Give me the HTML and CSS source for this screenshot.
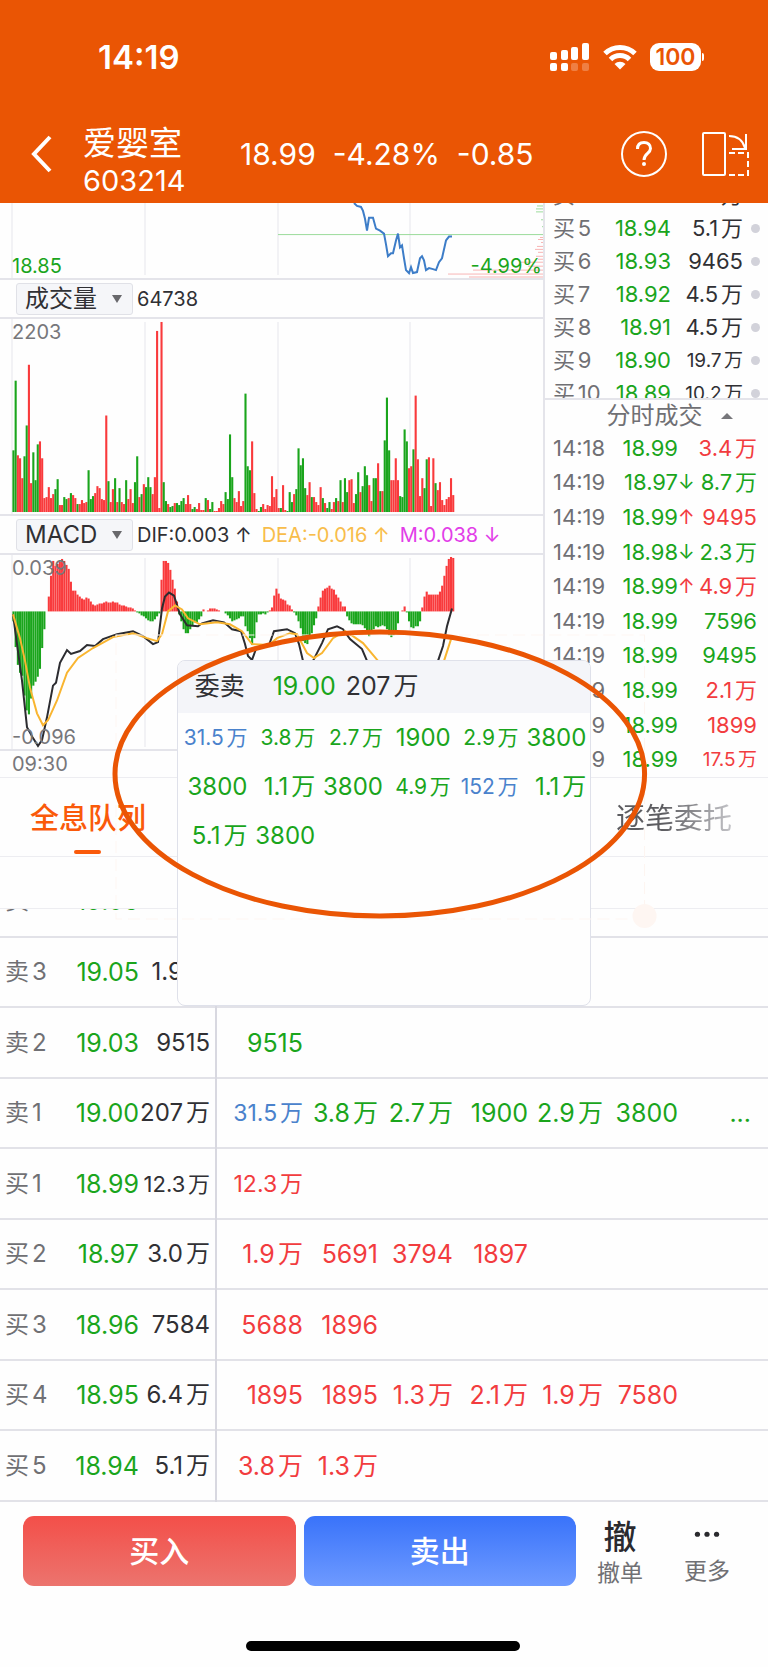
FILE: index.html
```
<!DOCTYPE html>
<html lang="zh-CN">
<head>
    <meta charset="UTF-8">
    <meta name="viewport" content="width=device-width, initial-scale=1.0">
    <title>爱婴室 603214</title>
    <link rel="stylesheet" href="styles.css">
</head>
<body>
    <header class="header">
        <div class="status-bar">
            <span class="clock">14:19</span>
            <div class="status-icons">
                <svg width="40" height="28" viewBox="0 0 40 28" fill="#fff">
                    <rect x="0" y="9" width="7" height="8" rx="2"/>
                    <rect x="11" y="7" width="7" height="10" rx="2"/>
                    <rect x="21" y="4" width="7" height="13" rx="2"/>
                    <rect x="32" y="0" width="7" height="17" rx="2"/>
                    <rect x="0" y="20" width="7" height="8" rx="2"/>
                    <rect x="11" y="20" width="7" height="8" rx="2"/>
                    <rect x="21" y="20" width="7" height="8" rx="2" opacity=".25"/>
                    <rect x="32" y="20" width="7" height="8" rx="2" opacity=".25"/>
                </svg>
                <svg width="34" height="26" viewBox="0 0 34 26" fill="none" stroke="#fff" stroke-width="5">
                    <path d="M2 9.500A21.500 21.500 0 0 1 32 9.500"/>
                    <path d="M7.500 15.500A13.500 13.500 0 0 1 26.500 15.500"/>
                    <path d="M17 25.500L11.500 20A8 8 0 0 1 22.500 20Z" fill="#fff" stroke="none"/>
                </svg>
                <span class="battery">100</span>
            </div>
        </div>
        <div class="title-bar">
            <button class="icon-btn back" aria-label="返回">
                <svg width="22" height="38" viewBox="0 0 22 38" fill="none" stroke="#fff" stroke-width="4"><path d="M20 2L4 19L20 36"/></svg>
            </button>
            <h1 class="stock">爱婴室<small>603214</small></h1>
            <div class="quote"><span>18.99</span><span>-4.28%</span><span>-0.85</span></div>
            <button class="icon-btn help" aria-label="帮助">
                <svg width="46" height="46" viewBox="0 0 46 46" fill="none" stroke="#fff" stroke-width="2">
                    <circle cx="23" cy="23" r="22"/>
                    <path d="M16.500 18C16.500 13.500 19 11.500 23 11.500S29.500 14 29.500 17.500C29.500 22.500 23 22.500 23 29" stroke-width="3"/>
                    <circle cx="23" cy="33" r="2" fill="#fff" stroke="none"/>
                </svg>
            </button>
            <button class="icon-btn rotate" aria-label="横屏">
                <svg width="48" height="46" viewBox="0 0 48 46" fill="none" stroke="#fff" stroke-width="2">
                    <rect x="2" y="2" width="22" height="42" rx="1"/>
                    <path d="M28 22H47V44H26" stroke-dasharray="6 3"/>
                    <path d="M28 5C37 5 42 10 44 17M45 3V18H31"/>
                </svg>
            </button>
        </div>
    </header>

    <main class="main">
        <section class="market">
            <div class="charts">
                <div class="chart price-chart">
                    <svg viewBox="0 0 543 76" preserveAspectRatio="none">
                        <path class="grid" d="M12 0V76M145 0V73M278 0V73M410 0V73"/>
                        <path class="dist-green" d="M278 32H543M537 3H543M536 6H543M536 9H543M541 17H543M542 24H543"/>
                        <path class="dist-red" d="M540 35H543M538 37H543M541 40H543M537 44H543M535 47H543M538 50H543M536 54H543M538 57H543M520 60H543M528 64H543M473 68H543M448 72H543M469 75H543"/>
                        <polyline class="price-line" points="354,0 357,3 361,4 363,8 365,16 367,28 369,15 373,15 376,26 380,28 384,31 386,42 388,54 391,51 393,51 396,38 398,31 400,45 402,43 404,56 406,68 409,71 411,65 413,71 417,70 420,56 422,54 424,58 426,68 429,66 433,67 436,68 439,60 442,56 446,38 449,34 452,34"/>
                    </svg>
                    <span class="mark bottom green">18.85</span>
                    <span class="mark bottom right green">-4.99%</span>
                </div>
                <div class="toolbar">
                    <button class="picker">成交量<i></i></button>
                    <span>64738</span>
                </div>
                <div class="chart volume-chart">
                    <svg viewBox="0 0 543 196" preserveAspectRatio="none">
                        <path class="grid" d="M12 0V196M145 3V194M278 3V194M410 3V194"/>
                        <g id="volumeBars"></g>
                    </svg>
                    <span class="mark top">2203</span>
                </div>
                <div class="toolbar">
                    <button class="picker">MACD<i></i></button>
                    <span>DIF:0.003 ↑</span>
                    <span class="dea">DEA:-0.016 ↑</span>
                    <span class="macd">M:0.038 ↓</span>
                </div>
                <div class="chart macd-chart">
                    <svg viewBox="0 0 543 196" preserveAspectRatio="none">
                        <path class="grid" d="M12 0V196M145 3V194M278 3V194M410 3V194"/>
                        <g id="macdBars"></g>
                        <polyline class="dif-line" points="13,60 17,90 22,127 27,174 33,185 38,193 42,187 47,164 53,132 56,129 60,109 67,96 71,100 80,97 87,91 95,92 103,85 117,80 133,77 143,82 153,90 158,88 162,54 165,42 169,38 174,41 180,60 187,71 198,72 202,69 213,66 224,68 232,75 241,77 245,90 248,102 252,106 256,95 269,91 274,77 287,75 295,79 299,90 303,107 308,118 313,107 322,89 328,75 337,72 343,75 350,85 362,95 367,107 380,130 420,130 438,107 443,92 447,72 452,54"/>
                        <polyline class="dea-line" points="13,60 20,84 25,107 30,134 37,160 43,172 48,167 57,147 67,119 78,104 93,94 113,83 133,79 147,84 157,87 162,80 168,57 175,51 182,55 188,64 200,70 217,68 230,70 242,77 252,90 269,91 277,84 290,79 297,80 307,99 314,104 322,99 333,84 345,77 353,82 363,89 378,107 400,125 430,125 444,107 452,82"/>
                    </svg>
                    <span class="mark top">0.039</span>
                    <span class="mark bottom">-0.096</span>
                </div>
                <div class="time-axis">09:30</div>
            </div>

            <aside class="side">
                <div class="depth">
                    <table class="depth-table">
                        <tr><th>买4</th><td class="green">18.95</td><td>6.4万</td><td><i class="dot"></i></td></tr>
                        <tr><th>买5</th><td class="green">18.94</td><td>5.1万</td><td><i class="dot"></i></td></tr>
                        <tr><th>买6</th><td class="green">18.93</td><td>9465</td><td><i class="dot"></i></td></tr>
                        <tr><th>买7</th><td class="green">18.92</td><td>4.5万</td><td><i class="dot"></i></td></tr>
                        <tr><th>买8</th><td class="green">18.91</td><td>4.5万</td><td><i class="dot"></i></td></tr>
                        <tr><th>买9</th><td class="green">18.90</td><td class="small">19.7万</td><td><i class="dot"></i></td></tr>
                        <tr><th>买10</th><td class="green">18.89</td><td class="small">10.2万</td><td><i class="dot"></i></td></tr>
                    </table>
                </div>
                <button class="trades-title">分时成交<i></i></button>
                <table class="trades">
                    <tr><th>14:18</th><td class="green">18.99</td><td></td><td class="red">3.4万</td></tr>
                    <tr><th>14:19</th><td class="green">18.97</td><td class="green">↓</td><td class="green">8.7万</td></tr>
                    <tr><th>14:19</th><td class="green">18.99</td><td class="red">↑</td><td class="red">9495</td></tr>
                    <tr><th>14:19</th><td class="green">18.98</td><td class="green">↓</td><td class="green">2.3万</td></tr>
                    <tr><th>14:19</th><td class="green">18.99</td><td class="red">↑</td><td class="red">4.9万</td></tr>
                    <tr><th>14:19</th><td class="green">18.99</td><td></td><td class="green">7596</td></tr>
                    <tr><th>14:19</th><td class="green">18.99</td><td></td><td class="green">9495</td></tr>
                    <tr><th>14:19</th><td class="green">18.99</td><td></td><td class="red">2.1万</td></tr>
                    <tr><th>14:19</th><td class="green">18.99</td><td></td><td class="red">1899</td></tr>
                    <tr><th>14:19</th><td class="green">18.99</td><td></td><td class="red small">17.5万</td></tr>
                </table>
            </aside>
        </section>

        <nav class="tabs">
            <a href="#queue" class="tab active">全息队列</a>
            <a href="#orders" class="tab fading">逐笔委托</a>
        </nav>

        <section class="queue" id="queue">
            <table class="queue-table">
                <tr><th>卖4</th><td class="green">19.06</td><td>8.3万</td><td></td></tr>
                <tr><th>卖3</th><td class="green">19.05</td><td>1.9万</td><td></td></tr>
                <tr><th>卖2</th><td class="green">19.03</td><td>9515</td><td><div class="lots green"><span>9515</span></div></td></tr>
                <tr><th>卖1</th><td class="green">19.00</td><td>207万</td><td><div class="lots green"><span class="blue small">31.5万</span><span>3.8万</span><span>2.7万</span><span>1900</span><span>2.9万</span><span>3800</span><span class="more">...</span></div></td></tr>
                <tr><th>买1</th><td class="green">18.99</td><td class="small">12.3万</td><td><div class="lots red"><span class="small">12.3万</span></div></td></tr>
                <tr><th>买2</th><td class="green">18.97</td><td>3.0万</td><td><div class="lots red"><span>1.9万</span><span>5691</span><span>3794</span><span>1897</span></div></td></tr>
                <tr><th>买3</th><td class="green">18.96</td><td>7584</td><td><div class="lots red"><span>5688</span><span>1896</span></div></td></tr>
                <tr><th>买4</th><td class="green">18.95</td><td>6.4万</td><td><div class="lots red"><span>1895</span><span>1895</span><span>1.3万</span><span>2.1万</span><span>1.9万</span><span>7580</span></div></td></tr>
                <tr><th>买5</th><td class="green">18.94</td><td>5.1万</td><td><div class="lots red"><span>3.8万</span><span>1.3万</span></div></td></tr>
            </table>
        </section>

        <div class="popup">
            <div class="popup-head"><span>委卖</span><span class="green">19.00</span><span>207万</span></div>
            <div class="popup-body green">
                <span class="small blue">31.5万</span><span class="small">3.8万</span><span class="small">2.7万</span><span>1900</span><span class="small">2.9万</span><span>3800</span>
                <span>3800</span><span>1.1万</span><span>3800</span><span class="small">4.9万</span><span class="small blue">152万</span><span>1.1万</span>
                <span>5.1万</span><span>3800</span>
            </div>
        </div>
        <svg class="callout" viewBox="0 0 536 300" preserveAspectRatio="none">
            <path d="M1 6H528V290H1Z" stroke="#fdf5f1" stroke-width="1" stroke-dasharray="12 6"/>
            <circle cx="528" cy="287" r="12" fill="#fef6f2"/>
            <ellipse cx="264" cy="145" rx="264" ry="142" stroke="#ea5504" stroke-width="5"/>
        </svg>
    </main>

    <footer class="footer">
        <div class="actions">
            <button class="trade buy">买入</button>
            <button class="trade sell">卖出</button>
            <button class="action"><b>撤</b>撤单</button>
            <button class="action more-action">
                <svg width="30" height="46" viewBox="0 0 30 46" fill="#2a2a2e"><circle cx="4" cy="21" r="3"/><circle cx="15" cy="21" r="3"/><circle cx="26" cy="21" r="3"/></svg>
                更多
            </button>
        </div>
        <div class="home-indicator"></div>
    </footer>

    <script>
        // One entry per minute since 09:30: colour and bar height
        const volume = 'g62 g132 r57 r54 r34 g56 g87 r148 r29 g60 g32 g68 r71 r54 r14 r15 r25 r14 r18 g23 ' +
            'g33 r7 r7 g15 g13 r14 g19 r17 r14 g8 r8 r12 r9 r10 g42 g13 g16 r19 r26 r24 ' +
            'r13 r12 r97 g31 r10 r23 g34 r10 g24 r10 r8 g32 r13 r23 r9 g30 g56 r15 g18 r28 ' +
            'g25 g35 g25 r18 r35 r182 r4 r191 g30 g11 r8 g5 g6 r9 g9 g7 g11 g14 r8 r17 ' +
            'r8 g3 g5 r3 r9 r2 r2 g14 r12 g3 g10 r1 r1 r4 r11 r8 g20 g13 g78 g35 ' +
            'r14 r10 r21 r6 r11 g119 g46 g42 r71 r19 r3 g1 g5 r8 r3 r7 r6 r36 r15 r23 ' +
            'r4 g4 r27 r2 g1 g20 g10 r18 g23 g64 g47 g54 g24 r17 r30 g15 r15 r10 r7 r25 ' +
            'g14 r9 g4 g10 r3 r10 g14 r11 g32 r10 g34 g20 r32 r33 r9 g18 g40 r20 g26 g46 ' +
            'g37 r27 r11 g34 g34 r49 g21 r21 g72 g115 g62 r32 r32 r54 r32 g16 g15 g83 g71 r44 ' +
            'r46 g63 r117 r53 r16 r34 g24 g53 r55 r6 r54 g29 r22 r30 r12 r7 r13 r15 r34 r17';

        // MACD histogram, up is positive
        const macd = [-10, -36, -54, -62, -65, -85, -100, -104, -88, -75, -71, -66, -58, -37, -18, 0, 15, 36, 51, 46,
            48, 50, 53, 51, 47, 43, 30, 21, 21, 17, 15, 13, 12, 14, 13, 10, 7, 6, 7, 8,
            8, 9, 10, 9, 9, 10, 9, 9, 7, 6, 6, 5, 4, 4, 3, 1, -1, -2, -4, -5,
            -7, -9, -10, -10, -8, -5, -2, 32, 51, 51, 49, 42, 32, 23, 10, -3, -10, -18, -22, -22,
            -18, -14, -11, -11, -8, -5, 2, 0, 1, 3, 3, 3, 2, 1, 0, 0, -2, -4, -7, -10,
            -9, -8, -7, -5, -5, -15, -20, -27, -34, -27, -11, -3, -3, -2, -3, -1, 1, 4, 16, 23,
            18, 13, 12, 11, 7, 6, 2, -1, -4, -10, -17, -30, -32, -33, -24, -22, -14, -7, 5, 14,
            21, 23, 24, 26, 23, 22, 17, 14, 10, 5, 5, -5, -9, -12, -13, -13, -13, -13, -14, -17,
            -20, -25, -20, -18, -15, -16, -15, -14, -15, -18, -24, -26, -24, -21, -12, 0, 1, 5, -1, -10,
            -16, -17, -15, -15, -10, 4, 15, 20, 17, 17, 17, 17, 17, 20, 26, 36, 46, 53, 55, 54];

        const step = 2.21;
        const colors = { r: '#f93a3c', g: '#1aa51c' };

        function bar(i, y, height, color) {
            const x = (12.4 + i * step).toFixed(2);
            return `<rect x="${x}" y="${y}" width="2.1" height="${height}" fill="${color}"/>`;
        }

        document.getElementById('volumeBars').innerHTML = volume.split(' ').map((item, i) => {
            const height = Number(item.slice(1));
            return bar(i, 194 - height, height, colors[item[0]]);
        }).join('');

        document.getElementById('macdBars').innerHTML = macd.map((value, i) =>
            value >= 0 ? bar(i, 57 - value, value, colors.r) : bar(i, 57, -value, colors.g)
        ).join('');
    </script>
</body>
</html>
```
FILE: styles.css
```
* {
    margin: 0;
    padding: 0;
    box-sizing: border-box;
}

body {
    font-family: Inter, "Noto Sans CJK SC", sans-serif;
    font-size: 24px;
    color: #303034;
    background-color: #fefefe;
    text-autospace: normal;
}

button {
    font: inherit;
    color: inherit;
    background: none;
    border: none;
    cursor: pointer;
}

table {
    border-collapse: collapse;
    table-layout: fixed;
    width: 100%;
}

th {
    font-weight: normal;
    text-align: left;
    color: #707074;
}

.green { color: #1aa51c; }
.red { color: #f23c3e; }
.blue { color: #4a82cc; }

/* header */
.header {
    background-color: #ea5504;
    color: #fff;
    height: 203px;
}

.status-bar {
    display: flex;
    justify-content: space-between;
    align-items: center;
    height: 114px;
    padding: 0 67px 0 98px;
}

.clock {
    font-size: 33px;
    font-weight: 600;
}

.status-icons {
    display: flex;
    align-items: center;
    gap: 13px;
}

.battery {
    position: relative;
    width: 51px;
    border-radius: 9px;
    background-color: #fff;
    color: #ea5504;
    font-size: 23px;
    font-weight: 600;
    line-height: 28px;
    text-align: center;
}

.battery::after {
    content: "";
    position: absolute;
    top: 10px;
    right: -3px;
    width: 2px;
    height: 8px;
    border-radius: 0 2px 2px 0;
    background-color: #fff;
}

.title-bar {
    display: flex;
    align-items: center;
    height: 80px;
    padding: 0 19px 0 30px;
}

.icon-btn {
    display: flex;
}

.stock {
    width: 157px;
    margin: 14px 0 0 31px;
    font-size: 33px;
    font-weight: normal;
    line-height: 40px;
}

.stock small {
    display: block;
    font-size: 29px;
    line-height: 36px;
}

.quote {
    display: flex;
    gap: 17px;
    flex: 1;
    font-size: 30px;
}

.rotate {
    margin-left: 34px;
}

/* charts and side lists */
.main {
    position: relative;
}

.market {
    display: grid;
    grid-template-columns: minmax(0, 1fr) 225px;
    border-bottom: 1px solid #ededf1;
}

.chart {
    position: relative;
    border-bottom: 2px solid #e4e4ea;
}

.chart svg {
    display: block;
    width: 100%;
    height: 100%;
}

.price-chart { height: 77px; }
.volume-chart { height: 197px; }
.macd-chart { height: 196px; }

.grid { stroke: #e7e7ed; stroke-width: 1; }
.dist-green { stroke: #9bdc9b; stroke-width: 1; }
.dist-red { stroke: #f8b4b4; stroke-width: 1; }

.price-line,
.dif-line,
.dea-line {
    fill: none;
    stroke-width: 2;
}

.price-line { stroke: #3d7dc8; }
.dif-line { stroke: #2c2c30; }
.dea-line { stroke: #f9b530; }

.mark {
    position: absolute;
    left: 12px;
    font-size: 20px;
    line-height: 24px;
    color: #77777b;
}

.mark.top { top: 1px; }
.mark.bottom { bottom: 0; }
.mark.right { left: auto; right: 1px; }
.mark.green { color: #1aa51c; }

.toolbar {
    display: flex;
    align-items: center;
    gap: 10px;
    height: 39px;
    padding-left: 16px;
    border-bottom: 2px solid #e4e4ea;
    font-size: 20px;
    line-height: 30px;
}

.picker {
    display: flex;
    align-items: center;
    justify-content: space-between;
    width: 117px;
    height: 32px;
    margin-right: -6px;
    padding: 0 10px 0 8px;
    border: 1px solid #e0e1e7;
    border-radius: 3px;
    background-color: #f5f6f9;
    font-size: 24px;
    line-height: 28px;
}

.picker i {
    border: 5px solid transparent;
    border-top: 8px solid #68686c;
    border-bottom: none;
}

.dea { color: #f8bd4b; }
.macd { color: #e23de8; }

.time-axis {
    padding-left: 12px;
    color: #77777b;
    font-size: 20px;
    line-height: 26px;
}

.side {
    border-left: 2px solid #e4e4ea;
}

.depth {
    height: 197px;
    overflow: hidden;
    border-bottom: 2px solid #e4e4ea;
}

.depth-table {
    margin-top: -24px;
}

.depth-table tr,
.depth-table td {
    height: 33px;
}

.depth-table th,
.depth-table td,
.trades th,
.trades td {
    font-size: 22px;
    line-height: 33px;
    white-space: nowrap;
    text-align: right;
    vertical-align: middle;
}

.depth-table th { width: 58px; padding-left: 8px; text-align: left; }
.depth-table td:nth-child(2) { width: 68px; }
.depth-table td:nth-child(4) { width: 25px; padding-right: 8px; line-height: 0; }

.depth-table .small,
.trades .small {
    font-size: 19px;
}

.dot {
    display: inline-block;
    width: 9px;
    height: 9px;
    border-radius: 50%;
    background-color: #d2d2da;
}

.trades-title {
    display: flex;
    align-items: center;
    justify-content: center;
    gap: 18px;
    width: 100%;
    height: 31px;
    padding-left: 26px;
    font-size: 24px;
    line-height: 30px;
    color: #707074;
}

.trades-title i {
    border: 6px solid transparent;
    border-bottom: 6px solid #77777b;
    border-top: none;
}

.trades {
    height: 346px;
}

.trades th { width: 62px; padding-left: 8px; text-align: left; }
.trades td:nth-child(2) { width: 71px; }
.trades td:nth-child(3) { width: 15px; font-size: 20px; }
.trades td:nth-child(4) { padding-right: 11px; }

/* tabs */
.tabs {
    display: flex;
    justify-content: space-between;
    height: 79px;
    padding: 0 36px 0 30px;
    border-bottom: 1px solid #ededf1;
}

.tab {
    position: relative;
    font-size: 29px;
    line-height: 82px;
    color: #707074;
    text-decoration: none;
}

.tab.active {
    color: #fa5a0a;
    font-weight: 500;
}

.tab.active::after {
    content: "";
    position: absolute;
    left: 50%;
    bottom: 2px;
    width: 27px;
    height: 4px;
    margin-left: -14px;
    border-radius: 2px;
    background-color: #fa5a0a;
}

.tab.fading {
    background: linear-gradient(90deg, #5c5c60 40%, #c4c4c8);
    -webkit-background-clip: text;
    background-clip: text;
    color: transparent;
}

/* order queue */
.queue {
    margin-top: 51px;
    overflow: hidden;
    border-top: 1px solid #ededf1;
}

.queue-table {
    margin-top: -43px;
}

.queue-table tr {
    height: 70px;
    border-bottom: 2px solid #e2e2e8;
}

.queue-table tr:nth-child(odd) {
    height: 71px;
}

.queue-table th,
.queue-table td {
    line-height: 40px;
    vertical-align: middle;
}

.queue-table td {
    font-size: 25px;
    text-align: right;
    white-space: nowrap;
}

.queue-table th { width: 63px; padding-left: 5px; }
.queue-table td:nth-child(2) { width: 76px; }
.queue-table td:nth-child(3) { width: 77px; padding-right: 5px; border-right: 2px solid #d8d8e0; font-size: 24px; }
.queue-table .small { font-size: 23px; }
.queue-table td:nth-child(3).small { font-size: 22px; }

.lots {
    display: grid;
    grid-template-columns: repeat(6, 75px) 1fr;
    padding-left: 11px;
}

.lots .more {
    padding-right: 17px;
}

/* queue detail popup */
.popup {
    position: absolute;
    top: 457px;
    left: 23%;
    width: 54%;
    height: 346px;
    border: 1px solid #dfe1ea;
    border-radius: 8px;
    background-color: #fefefe;
    overflow: hidden;
}

.popup-head {
    display: flex;
    height: 52px;
    padding-left: 17px;
    background-color: #f4f5f9;
    font-size: 25px;
    line-height: 50px;
}

.popup-head span:nth-child(2) {
    margin: 0 10px 0 28px;
}

.popup-body {
    display: grid;
    grid-template-columns: repeat(6, 1fr);
    padding: 0 4px 0 2px;
    font-size: 24px;
    line-height: 49px;
    text-align: right;
    white-space: nowrap;
}

.popup-body .small {
    font-size: 21px;
}

.callout {
    position: absolute;
    top: 426px;
    left: 15%;
    width: 70%;
    height: 300px;
    fill: none;
    overflow: visible;
    pointer-events: none;
}

/* bottom bar */
.footer {
    padding: 14px 25px 0 23px;
}

.actions {
    display: flex;
    gap: 8px;
    height: 70px;
}

.trade {
    flex: 1;
    border-radius: 11px;
    color: #fff;
    font-size: 30px;
    font-weight: 500;
    line-height: 60px;
}

.buy { background: linear-gradient(#f34f49, #ec746e); }
.sell { background: linear-gradient(#3973fa, #6e9aff); }

.action {
    display: flex;
    flex-direction: column;
    align-items: center;
    width: 72px;
    font-size: 23px;
    line-height: 30px;
    color: #707074;
}

.more-action {
    margin-left: 7px;
}

.action b {
    height: 46px;
    font-size: 33px;
    font-weight: 500;
    line-height: 42px;
    color: #2a2a2e;
}

.home-indicator {
    width: 274px;
    height: 10px;
    margin: 55px auto 16px;
    border-radius: 5px;
    background-color: #000;
}
```
